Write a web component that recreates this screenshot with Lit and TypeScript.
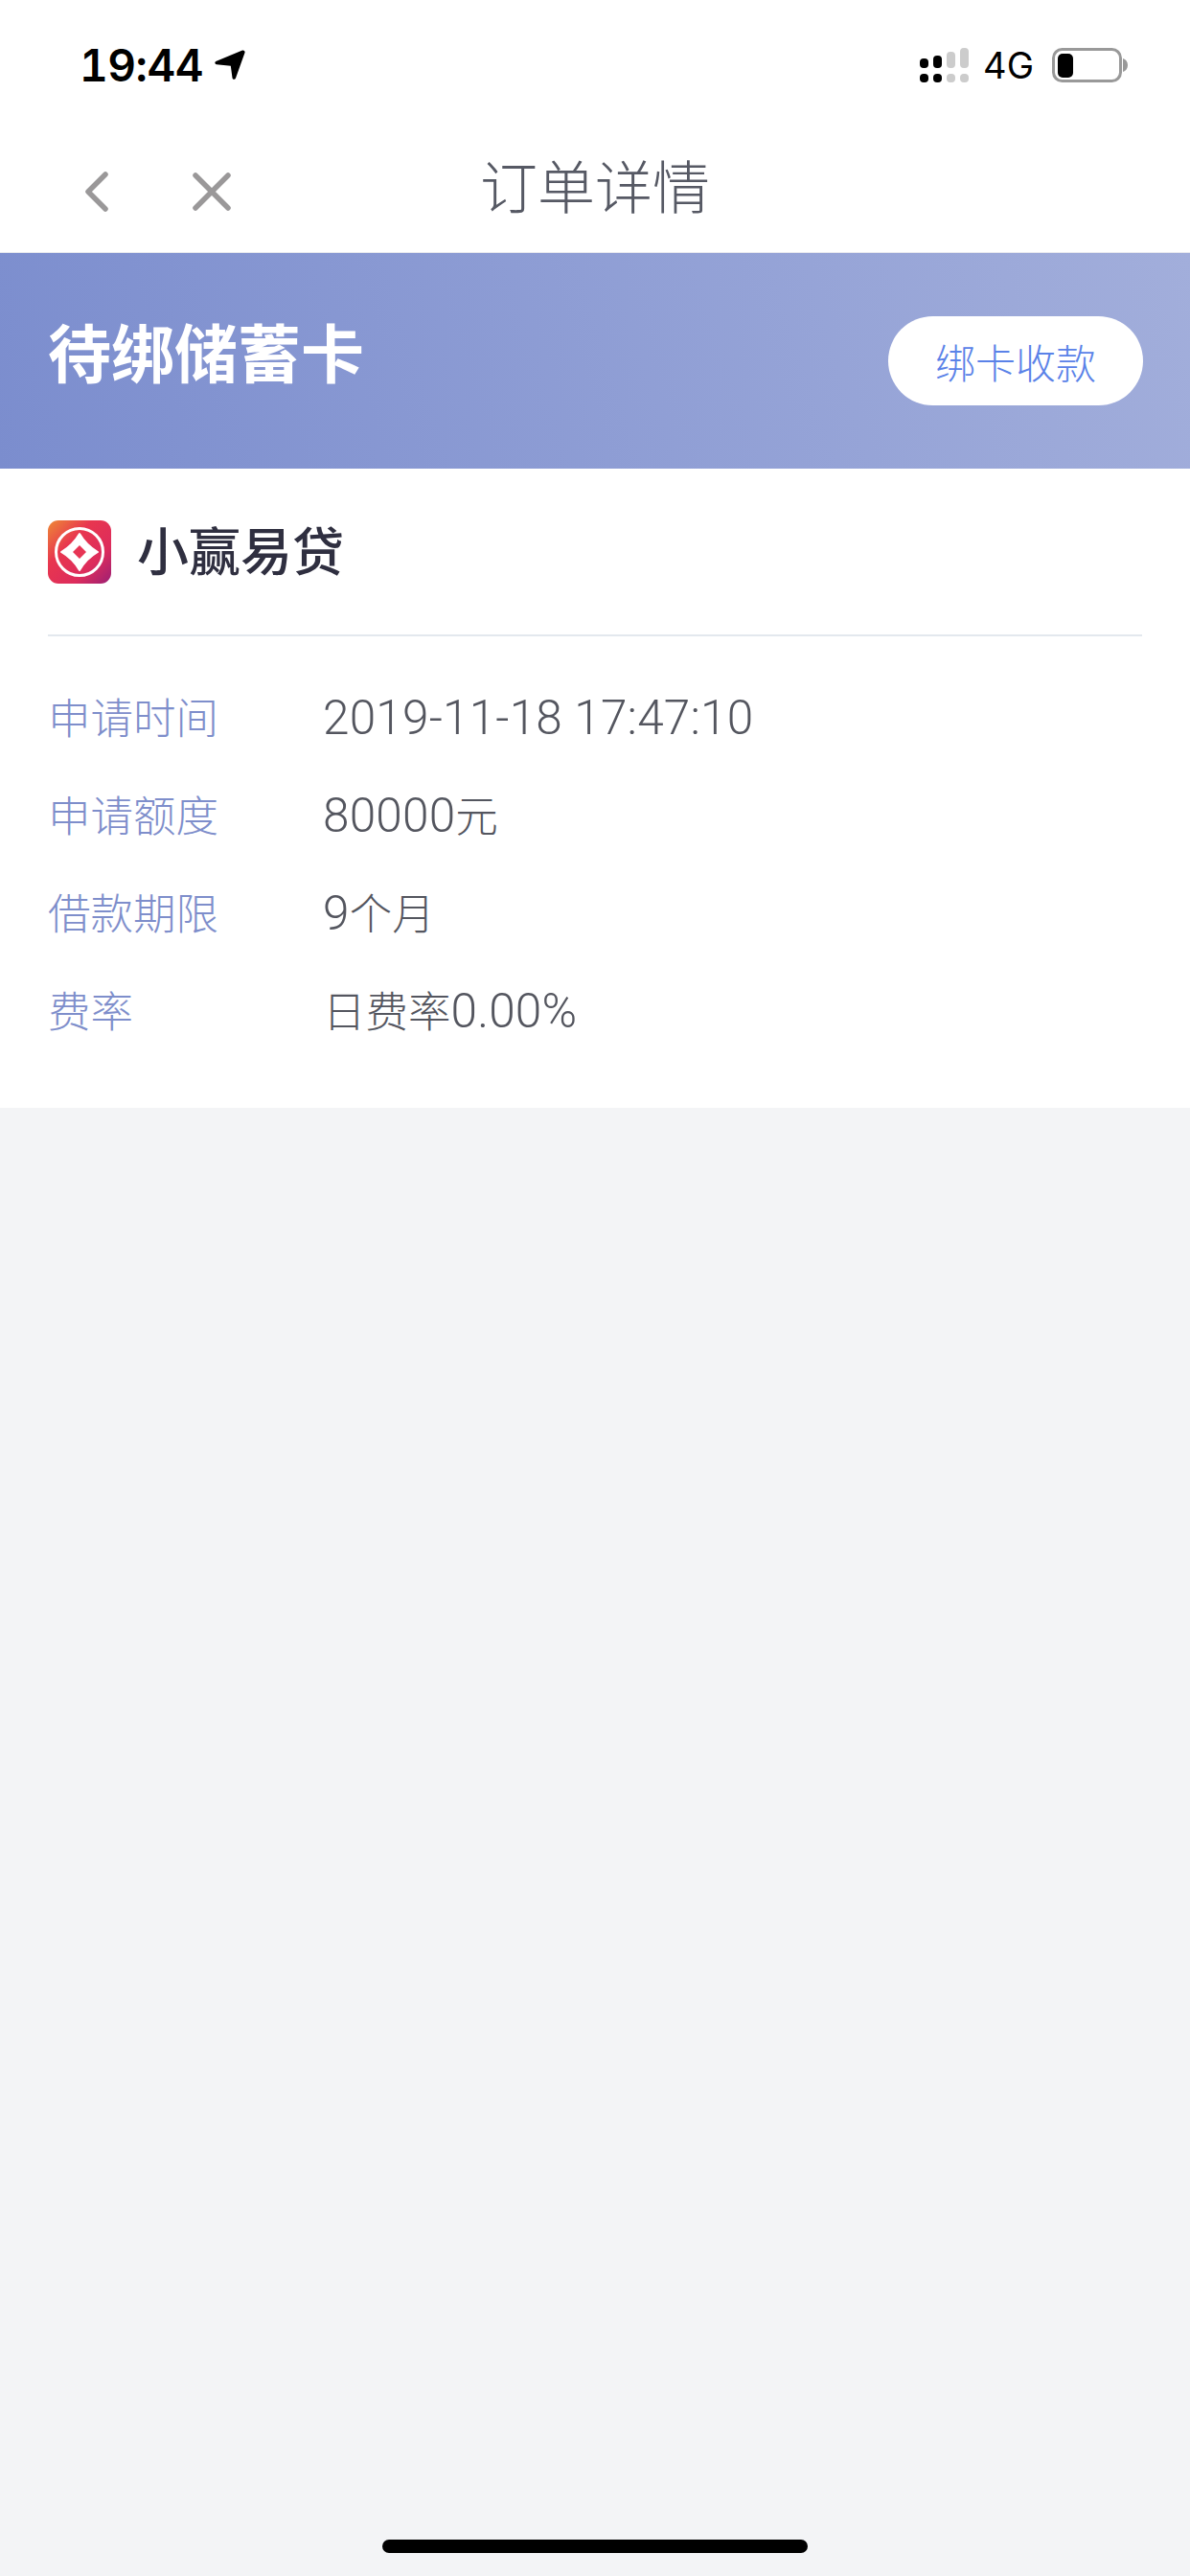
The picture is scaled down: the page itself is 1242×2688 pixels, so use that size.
import { LitElement, css, html, svg } from 'lit'
import { customElement } from 'lit/decorators.js'

const rows = [
  { label: '申请时间', value: '2019-11-18 17:47:10' },
  { label: '申请额度', value: '80000元' },
  { label: '借款期限', value: '9个月' },
  { label: '费率', value: '日费率0.00%' },
]

// digits sit larger than the CJK text next to them
const splitRuns = (text: string) =>
  text.split(/([\u4e00-\u9fff]+)/).filter(Boolean).map((run) =>
    /[\u4e00-\u9fff]/.test(run) ? html`<span>${run}</span>` : html`<span class="num">${run}</span>`,
  )

const signal = svg`
  <svg class="signal" width="51" height="36" viewBox="0 0 51 36">
    <rect x="0" y="11" width="9" height="10" rx="4" fill="#000"/>
    <rect x="14" y="8" width="9" height="13" rx="4" fill="#000"/>
    <rect x="28" y="4" width="9" height="17" rx="4" fill="#ccc"/>
    <rect x="42" y="0" width="9" height="21" rx="4" fill="#ccc"/>
    <rect x="0" y="27" width="9" height="9" rx="4" fill="#000"/>
    <rect x="14" y="27" width="9" height="9" rx="4" fill="#000"/>
    <rect x="28" y="27" width="9" height="9" rx="4" fill="#ccc"/>
    <rect x="42" y="27" width="9" height="9" rx="4" fill="#ccc"/>
  </svg>`

const battery = svg`
  <svg class="battery" width="79" height="36" viewBox="0 0 79 36">
    <rect x="1.5" y="1.5" width="70" height="33" rx="9" fill="none" stroke="#999" stroke-width="3"/>
    <rect x="6" y="6" width="16" height="25" rx="5" fill="#000"/>
    <path d="M74 11c3 1 5 3.500 5 7s-2 6-5 7z" fill="#999"/>
  </svg>`

@customElement('app-root')
export class AppRoot extends LitElement {
  static styles = css`
    :host {
      display: block;
      font-family: 'Inter', 'Noto Sans CJK SC', sans-serif;
    }
    .page {
      position: relative;
      display: flex;
      flex-direction: column;
      min-height: 2688px;
      background: #f3f4f6;
    }
    .status {
      display: flex;
      align-items: center;
      height: 136px;
      padding: 0 65px 0 83px;
      background: #fff;
      color: #000;
    }
    .time {
      font-size: 46px;
      font-weight: 600;
      font-feature-settings: 'tnum';
      letter-spacing: -0.5px;
    }
    .arrow {
      margin-left: 12px;
    }
    .status-right {
      display: flex;
      align-items: center;
      margin-left: auto;
    }
    .net {
      margin: 0 19px 0 15px;
      font-size: 38px;
      font-weight: 400;
    }
    .nav {
      display: grid;
      grid-template-columns: 1fr auto 1fr;
      align-items: center;
      height: 127px;
      padding: 0 89px;
      background: #fff;
      border-bottom: 1px solid #e8e9ee;
    }
    .nav-icons {
      display: flex;
      align-items: center;
      gap: 88px;
    }
    .title {
      padding-bottom: 16px;
      font-size: 60px;
      font-weight: 300;
      color: #565964;
    }
    .banner {
      display: flex;
      align-items: center;
      justify-content: space-between;
      height: 225px;
      padding: 0 49px 0 50px;
      background: linear-gradient(72deg, #7b8dce 0%, #a2aedb 100%);
    }
    .banner h1 {
      margin: 0 0 24px;
      font-size: 66px;
      font-weight: 700;
      color: #fff;
    }
    .bind {
      display: flex;
      align-items: center;
      justify-content: center;
      width: 266px;
      height: 93px;
      border-radius: 47px;
      background: #fff;
      font-size: 42px;
      font-weight: 300;
      color: #5a82e8;
    }
    .card {
      padding: 0 50px;
      background: #fff;
    }
    .product {
      display: flex;
      align-items: center;
      gap: 27px;
      height: 175px;
      box-sizing: border-box;
      border-bottom: 2px solid #e3e8ee;
    }
    .product span {
      padding-bottom: 6px;
      font-size: 54px;
      font-weight: 500;
      color: #2f2f40;
    }
    .rows {
      padding: 31px 0 0;
      height: 492px;
      box-sizing: border-box;
    }
    .row {
      display: flex;
      align-items: center;
      height: 102px;
      font-weight: 300;
    }
    .label {
      width: 287px;
      font-size: 44.500px;
      color: #7e8ecb;
    }
    .value {
      padding-top: 7px;
      font-size: 44.500px;
      line-height: 60px;
      color: #54565f;
    }
    .num {
      font-family: 'Roboto', sans-serif;
      font-size: 49.500px;
      letter-spacing: 0.2px;
    }
    .home {
      position: absolute;
      left: 399px;
      bottom: 24px;
      width: 444px;
      height: 14px;
      border-radius: 7px;
      background: #000;
    }
  `

  render() {
    return html`
      <div class="page">
        <div class="status">
          <span class="time">19:44</span>
          <svg class="arrow" width="32" height="32" viewBox="0 0 32 32">
            <path d="M29 0.500c1.500-.5 3 .8 2.500 2.500l-9.500 26.500c-.7 2-3.200 1.700-3.500-.3l-1.700-12.400L2 15.200C.2 15-.3 12.800 1.300 12z" fill="#000"/>
          </svg>
          <div class="status-right">
            ${signal}
            <span class="net">4G</span>
            ${battery}
          </div>
        </div>
        <div class="nav">
          <div class="nav-icons">
            <svg width="24" height="42" viewBox="0 0 24 42">
              <path d="M21 3 3 21l18 18" fill="none" stroke="#9a9899" stroke-width="5.500" stroke-linecap="round" stroke-linejoin="round"/>
            </svg>
            <svg width="40" height="40" viewBox="0 0 40 40">
              <path d="M3 3l34 34M37 3 3 37" fill="none" stroke="#9a9899" stroke-width="5.500" stroke-linecap="round"/>
            </svg>
          </div>
          <div class="title">订单详情</div>
        </div>
        <div class="banner">
          <h1>待绑储蓄卡</h1>
          <div class="bind">绑卡收款</div>
        </div>
        <div class="card">
          <div class="product">
            <svg width="66" height="66" viewBox="0 0 66 66">
              <defs>
                <linearGradient id="logo" x1="0" y1="0" x2="1" y2="1">
                  <stop offset="0" stop-color="#ee8a36"/>
                  <stop offset="0.35" stop-color="#e8364f"/>
                  <stop offset="0.7" stop-color="#dd2c5c"/>
                  <stop offset="1" stop-color="#9b1f74"/>
                </linearGradient>
              </defs>
              <rect width="66" height="66" rx="11" fill="url(#logo)"/>
              <circle cx="33" cy="33" r="24.500" fill="none" stroke="#fff" stroke-width="3"/>
              <path d="M33 14Q40 26 52 33 40 40 33 52 26 40 14 33 26 26 33 14z" fill="#fff" stroke="#fff" stroke-width="2" stroke-linejoin="round"/>
              <path d="M33 26l7 7-7 7-7-7z" fill="#e73555"/>
            </svg>
            <span>小赢易贷</span>
          </div>
          <div class="rows">
            ${rows.map(
              (r) => html`
                <div class="row">
                  <div class="label">${r.label}</div>
                  <div class="value">${splitRuns(r.value)}</div>
                </div>
              `,
            )}
          </div>
        </div>
        <div class="home"></div>
      </div>
    `
  }
}
